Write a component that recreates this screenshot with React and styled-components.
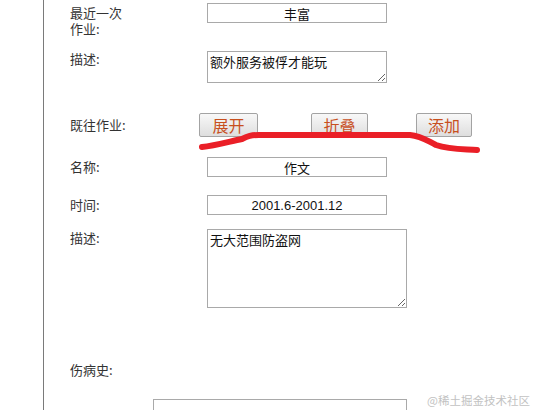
import React from "react";
import styled, { createGlobalStyle } from "styled-components";

const Global = createGlobalStyle`
  html, body {
    margin: 0;
    padding: 0;
    background: #fff;
    overflow: hidden;
  }
  body {
    font-family: "Noto Sans CJK SC", "Liberation Sans", sans-serif;
  }
`;

const Page = styled.div`
  position: relative;
  width: 534px;
  height: 410px;
  overflow: hidden;
  padding-left: 43px;
  box-sizing: border-box;
`;

const Panel = styled.div`
  border-left: 1px solid #7a7a7a;
  height: 100%;
  padding: 3px 0 0 26px;
  box-sizing: border-box;
`;

const Row = styled.div`
  display: grid;
  grid-template-columns: ${(p) => p.$cols || "137px auto"};
  align-items: ${(p) => p.$align || "start"};
  margin-top: ${(p) => p.$mt || 0}px;
`;

const Label = styled.div`
  font-size: 13px;
  line-height: 16px;
  color: #333;
  max-width: 60px;
  padding-top: ${(p) => p.$pt || 0}px;
`;

const TextInput = styled.input`
  display: block;
  width: ${(p) => p.$w || 180}px;
  height: 20px;
  margin: 0;
  padding: 0;
  box-sizing: border-box;
  border: 1px solid #a9a9a9;
  background: #fff;
  text-align: center;
  font-family: "Liberation Sans", "Noto Sans CJK SC", sans-serif;
  font-size: 13px;
  color: #111;
  outline: none;
`;

const TextArea = styled.textarea`
  display: block;
  width: ${(p) => p.$w}px;
  height: ${(p) => p.$h}px;
  margin: 0;
  padding: 2px;
  box-sizing: border-box;
  border: 1px solid #a9a9a9;
  font-family: "Noto Sans CJK SC", "Liberation Sans", sans-serif;
  font-size: 13px;
  line-height: 16px;
  color: #111;
  resize: both;
  outline: none;
`;

const Button = styled.button`
  width: ${(p) => p.$w}px;
  height: 24px;
  margin: 0;
  padding: 0;
  box-sizing: border-box;
  border: 1px solid #a3a3a3;
  border-radius: 2px;
  background: linear-gradient(#f8f8f8, #dedede);
  color: #c8501e;
  font-family: "Noto Sans CJK SC", sans-serif;
  font-size: 16px;
  line-height: 22px;
`;

const BottomRow = styled.div`
  margin-top: 21px;
  padding-left: 83px;
`;

const Mark = styled.svg`
  position: absolute;
  left: 0;
  top: 0;
  pointer-events: none;
`;

const Watermark = styled.div`
  position: absolute;
  right: 4px;
  bottom: 3px;
  color: #c2c2c2;
  font-family: "Noto Sans CJK SC", sans-serif;
  font-size: 11.5px;
  line-height: 14px;
`;

export default function App() {
  return (
    <Page>
      <Global />
      <Panel>
        <Row>
          <Label $pt={2}>最近一次作业:</Label>
          <TextInput defaultValue="丰富" />
        </Row>
        <Row $mt={14}>
          <Label>描述:</Label>
          <TextArea $w={180} $h={32} defaultValue="额外服务被俘才能玩" />
        </Row>
        <Row $mt={30} $align="center" $cols="129px 112px 105px auto">
          <Label>既往作业:</Label>
          <div>
            <Button $w={59}>展开</Button>
          </div>
          <div>
            <Button $w={57}>折叠</Button>
          </div>
          <div>
            <Button $w={56}>添加</Button>
          </div>
        </Row>
        <Row $mt={20} $align="center">
          <Label>名称:</Label>
          <TextInput defaultValue="作文" />
        </Row>
        <Row $mt={18} $align="center">
          <Label>时间:</Label>
          <TextInput defaultValue="2001.6-2001.12" />
        </Row>
        <Row $mt={14}>
          <Label $pt={1}>描述:</Label>
          <TextArea $w={200} $h={79} defaultValue="无大范围防盗网" />
        </Row>
        <Row $mt={54}>
          <Label>伤病史:</Label>
        </Row>
        <BottomRow>
          <TextInput $w={254} />
        </BottomRow>
      </Panel>
      <Mark width="534" height="410" viewBox="0 0 534 410">
        <path
          d="M202 147 C214 146 228 142 242 139 C248 136 251 135 259 135 L410 135 C421 136 426 140 436 145 C450 150 465 149 477 150"
          fill="none"
          stroke="#ea1f27"
          strokeWidth="6"
          strokeLinecap="round"
          strokeLinejoin="round"
        />
      </Mark>
      <Watermark>@稀土掘金技术社区</Watermark>
    </Page>
  );
}
